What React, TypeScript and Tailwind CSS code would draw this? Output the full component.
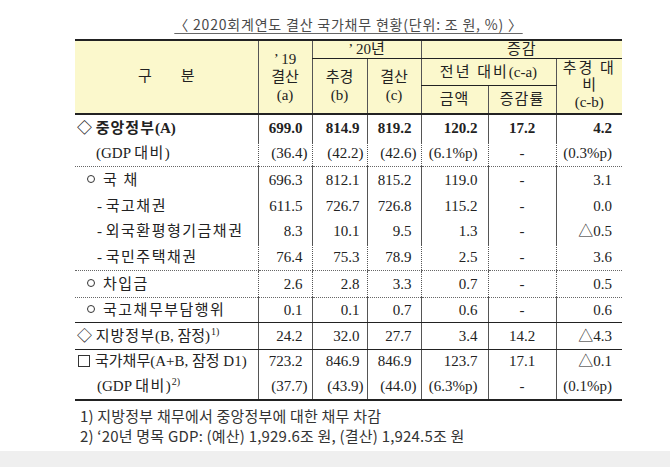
import type { ReactNode } from "react";

type Line = "none" | "dot" | "solid" | "thick";

interface Row {
  label: ReactNode;
  pad: string;
  vals: string[];
  h: string;
  line: Line;
  bold?: boolean;
}

const lineCls: Record<Line, string> = {
  none: "",
  dot: "border-b border-dotted border-b-[#666]",
  solid: "border-b border-b-[#222]",
  thick: "border-b-2 border-b-[#222]",
};

// right padding per numeric column; parenthesised values in the first three stick out a little
const numCls = [
  "text-right pr-[9px]",
  "text-right pr-[7px]",
  "text-right pr-[9px]",
  "text-right pr-[10px]",
  "text-center",
  "text-right pr-[10px]",
];
const parenCls = ["text-right pr-[4px]", "text-right pr-[3px]", "text-right pr-[4px]"];

const Sup = ({ children }: { children: ReactNode }) => (
  <sup className="text-[10px] -top-[6px] ml-[1px]">{children}</sup>
);

const Dot = () => (
  <span className="inline-block w-[8px] h-[8px] rounded-full border border-[#333] mr-[8px] align-[2px]" />
);

const Box = () => (
  <span className="inline-block w-[12px] h-[12px] border border-[#333] mr-[5px] align-[-1px]" />
);

const Ko = ({ children }: { children: ReactNode }) => (
  <span className="tracking-[1.5px]">{children}</span>
);

const rows: Row[] = [
  {
    label: (
      <>
        ◇ <span className="tracking-[1px]">중앙정부</span>(A)
      </>
    ),
    pad: "pl-[2px]",
    vals: ["699.0", "814.9", "819.2", "120.2", "17.2", "4.2"],
    h: "h-[28px]",
    line: "none",
    bold: true,
  },
  {
    label: (
      <>
        (GDP <Ko>대비</Ko>)
      </>
    ),
    pad: "pl-[21px]",
    vals: ["(36.4)", "(42.2)", "(42.6)", "(6.1%p)", "-", "(0.3%p)"],
    h: "h-[25px]",
    line: "dot",
  },
  {
    label: (
      <>
        <Dot />
        <Ko>국 채</Ko>
      </>
    ),
    pad: "pl-[12px]",
    vals: ["696.3", "812.1", "815.2", "119.0", "-", "3.1"],
    h: "h-[27px]",
    line: "none",
  },
  {
    label: (
      <>
        - <Ko>국고채권</Ko>
      </>
    ),
    pad: "pl-[22px]",
    vals: ["611.5", "726.7", "726.8", "115.2", "-", "0.0"],
    h: "h-[25px]",
    line: "none",
  },
  {
    label: (
      <>
        - <Ko>외국환평형기금채권</Ko>
      </>
    ),
    pad: "pl-[22px]",
    vals: ["8.3", "10.1", "9.5", "1.3", "-", "△0.5"],
    h: "h-[26px]",
    line: "none",
  },
  {
    label: (
      <>
        - <Ko>국민주택채권</Ko>
      </>
    ),
    pad: "pl-[22px]",
    vals: ["76.4", "75.3", "78.9", "2.5", "-", "3.6"],
    h: "h-[26px]",
    line: "dot",
  },
  {
    label: (
      <>
        <Dot />
        <Ko>차입금</Ko>
      </>
    ),
    pad: "pl-[12px]",
    vals: ["2.6", "2.8", "3.3", "0.7", "-", "0.5"],
    h: "h-[27px]",
    line: "dot",
  },
  {
    label: (
      <>
        <Dot />
        <Ko>국고채무부담행위</Ko>
      </>
    ),
    pad: "pl-[12px]",
    vals: ["0.1", "0.1", "0.7", "0.6", "-", "0.6"],
    h: "h-[25px]",
    line: "solid",
  },
  {
    label: (
      <>
        ◇ <span className="tracking-[1px]">지방정부</span>(B, 잠정)<Sup>1)</Sup>
      </>
    ),
    pad: "pl-[2px]",
    vals: ["24.2", "32.0", "27.7", "3.4", "14.2", "△4.3"],
    h: "h-[27px]",
    line: "solid",
  },
  {
    label: (
      <>
        <Box />
        국가채무(A+B, 잠정 D1)
      </>
    ),
    pad: "pl-[3px]",
    vals: ["723.2", "846.9", "846.9", "123.7", "17.1", "△0.1"],
    h: "h-[24px]",
    line: "none",
  },
  {
    label: (
      <>
        (GDP <Ko>대비</Ko>)<Sup>2)</Sup>
      </>
    ),
    pad: "pl-[22px]",
    vals: ["(37.7)", "(43.9)", "(44.0)", "(6.3%p)", "-", "(0.1%p)"],
    h: "h-[26px]",
    line: "thick",
  },
];

const head = "bg-[#fbf8cc] text-center align-middle font-normal text-[15px] leading-[17px] text-[#222]";
const vline = "border-l border-l-[#555]";

export default function App() {
  return (
    <div className="w-[670px] h-[467px] bg-white flex flex-col overflow-hidden font-['Liberation_Serif','Noto_Sans_CJK_KR',serif] text-[#222]">
      <div className="pt-[13px] ml-[75px] w-[547px] text-center">
        <span className="font-['Noto_Sans_CJK_KR',sans-serif] text-[14px] leading-[20px] tracking-[0.8px] text-[#4a4a4a] underline underline-offset-[3px] decoration-[#666]">
          〈 2020회계연도 결산 국가채무 현황(단위: 조 원, %) 〉
        </span>
      </div>

      <table className="mt-[2px] ml-[75px] w-[547px] table-fixed border-collapse text-[15px] leading-[17px]">
        <colgroup>
          <col className="w-[183px]" />
          <col className="w-[54px]" />
          <col className="w-[55px]" />
          <col className="w-[54px]" />
          <col className="w-[67px]" />
          <col className="w-[68px]" />
          <col className="w-[66px]" />
        </colgroup>
        <thead>
          <tr className="h-[18px]">
            <th rowSpan={3} className={`${head} border-t-2 border-t-[#222] border-b-2 border-b-[#222]`}>
              구<span className="inline-block w-[29px]" />분
            </th>
            <th rowSpan={3} className={`${head} ${vline} border-t-2 border-t-[#222] border-b-2 border-b-[#222] leading-[18px]`}>
              ’ 19
              <br />
              결산
              <br />
              (a)
            </th>
            <th colSpan={2} className={`${head} ${vline} border-t-2 border-t-[#222] border-b border-b-[#222]`}>
              ’ 20년
            </th>
            <th colSpan={3} className={`${head} ${vline} border-t-2 border-t-[#222] border-b border-b-[#222] tracking-[1px]`}>
              증감
            </th>
          </tr>
          <tr className="h-[27px]">
            <th rowSpan={2} className={`${head} ${vline} border-b-2 border-b-[#222] leading-[18px]`}>
              추경
              <br />
              (b)
            </th>
            <th rowSpan={2} className={`${head} ${vline} border-b-2 border-b-[#222] leading-[18px]`}>
              결산
              <br />
              (c)
            </th>
            <th colSpan={2} className={`${head} ${vline} border-b border-b-[#222]`}>
              <span className="tracking-[2px]">전년 대비</span>(c-a)
            </th>
            <th rowSpan={2} className={`${head} ${vline} border-b-2 border-b-[#222]`}>
              <span className="tracking-[2px]">추경 대</span>
              <br />
              비
              <br />
              (c-b)
            </th>
          </tr>
          <tr className="h-[28px]">
            <th className={`${head} ${vline} border-b-2 border-b-[#222] tracking-[1px]`}>금액</th>
            <th className={`${head} ${vline} border-b-2 border-b-[#222] tracking-[1px]`}>증감률</th>
          </tr>
        </thead>
        <tbody>
          {rows.map((r, i) => (
            <tr key={i} className={r.h}>
              <td className={`${r.pad} ${lineCls[r.line]} whitespace-nowrap ${r.bold ? "font-bold" : ""}`}>
                {r.label}
              </td>
              {r.vals.map((v, j) => (
                <td
                  key={j}
                  className={`${vline} ${lineCls[r.line]} whitespace-nowrap ${
                    j < 3 && v.startsWith("(") ? parenCls[j] : numCls[j]
                  } ${r.bold ? "font-bold" : ""}`}
                >
                  {v}
                </td>
              ))}
            </tr>
          ))}
        </tbody>
      </table>

      <div className="mt-[5px] ml-[80px] font-['Noto_Sans_CJK_KR',sans-serif] text-[15px] leading-[20px] tracking-[0.2px] text-[#333]">
        <p>1) 지방정부 채무에서 중앙정부에 대한 채무 차감</p>
        <p>2) ‘20년 명목 GDP: (예산) 1,929.6조 원, (결산) 1,924.5조 원</p>
      </div>

      <div className="mt-[5px] flex-1 bg-[#efefef]" />
    </div>
  );
}
